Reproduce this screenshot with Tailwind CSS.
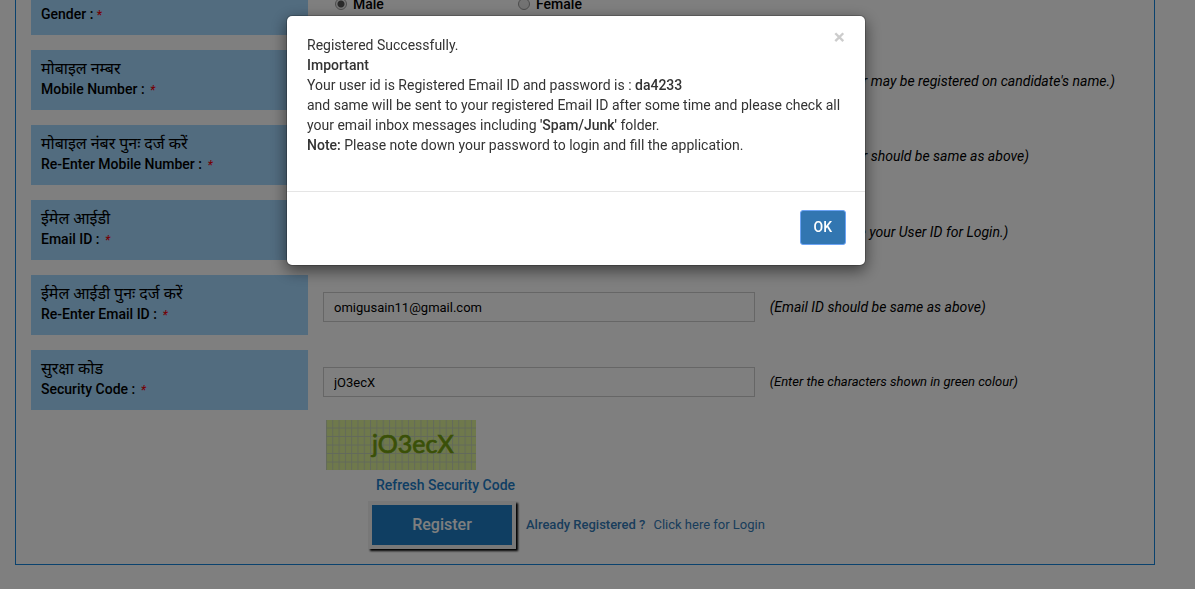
<!DOCTYPE html>
<html lang="en">
<head>
<meta charset="utf-8">
<title>Registration</title>
<script src="https://cdn.jsdelivr.net/npm/@tailwindcss/browser@4"></script>
</head>
<body class="bg-white font-['Roboto','Noto_Sans_Devanagari','Noto_Sans',sans-serif] text-sm leading-5 text-black overflow-hidden">
<main class="ml-[15px] mr-10 mb-6 border border-t-0 border-[#1484dc] px-[15px] pb-[15px]">
<form class="flex flex-col">
  <div class="flex flex-col gap-[15px]">
    <div class="grid grid-cols-12">
      <div class="col-span-3 bg-[#a4d8ff] px-2.5 pt-1 pb-[11px] font-medium">Gender : <span class="text-xs text-red-600">*</span></div>
      <div class="col-span-5 flex items-start pl-[27px] font-medium">
        <label class="flex w-[183px] items-center gap-1.5 -mt-1.5"><input type="radio" name="gender" checked class="size-3 appearance-none rounded-full border border-[#999] bg-[radial-gradient(circle,#555_0_3px,#eee_4px)]">Male</label>
        <label class="flex items-center gap-1.5 -mt-1.5"><input type="radio" name="gender" class="size-3 appearance-none rounded-full border border-[#999] bg-[#e6e6e6]">Female</label>
      </div>
    </div>
    <div class="grid grid-cols-12">
      <label for="mobile" class="col-span-3 bg-[#a4d8ff] px-2.5 pt-[9px] pb-[11px] font-medium"><span class="block text-base leading-5 font-normal" lang="hi">मोबाइल नम्बर</span>Mobile Number : <i class="ml-0.5 text-xs text-red-600">*</i></label>
      <div class="col-span-5 px-[15px] pt-[17px]"><input id="mobile" type="text" class="h-[30px] w-full border border-[#ccc] px-2.5 text-[13px]"></div>
      <p class="col-span-4 pt-[21px] italic whitespace-nowrap">(Mobile Number may be registered on candidate's name.)</p>
    </div>
    <div class="grid grid-cols-12">
      <label for="mobile2" class="col-span-3 bg-[#a4d8ff] px-2.5 pt-[9px] pb-[11px] font-medium"><span class="block text-base leading-5 font-normal" lang="hi">मोबाइल नंबर पुनः दर्ज करें</span>Re-Enter Mobile Number : <i class="ml-0.5 text-xs text-red-600">*</i></label>
      <div class="col-span-5 px-[15px] pt-[17px]"><input id="mobile2" type="text" class="h-[30px] w-full border border-[#ccc] px-2.5 text-[13px]"></div>
      <p class="col-span-4 pt-[21px] italic">(Mobile Number should be same as above)</p>
    </div>
    <div class="grid grid-cols-12">
      <label for="email" class="col-span-3 bg-[#a4d8ff] px-2.5 pt-[9px] pb-[11px] font-medium"><span class="block text-base leading-5 font-normal" lang="hi">ईमेल आईडी</span>Email ID : <i class="ml-0.5 text-xs text-red-600">*</i></label>
      <div class="col-span-5 px-[15px] pt-[17px]"><input id="email" type="text" class="h-[30px] w-full border border-[#ccc] px-2.5 text-[13px]"></div>
      <p class="col-span-4 pt-[22px] italic">(Email ID will be your User ID for Login.)</p>
    </div>
    <div class="grid grid-cols-12">
      <label for="email2" class="col-span-3 bg-[#a4d8ff] px-2.5 pt-[9px] pb-[11px] font-medium"><span class="block text-base leading-5 font-normal" lang="hi">ईमेल आईडी पुनः दर्ज करें</span>Re-Enter Email ID : <i class="ml-0.5 text-xs text-red-600">*</i></label>
      <div class="col-span-5 px-[15px] pt-[17px]"><input id="email2" type="text" value="omigusain11@gmail.com" class="h-[30px] w-full border border-[#ccc] px-2.5 text-[13px]"></div>
      <p class="col-span-4 pt-[22px] italic">(Email ID should be same as above)</p>
    </div>
    <div class="grid grid-cols-12">
      <label for="code" class="col-span-3 bg-[#a4d8ff] px-2.5 pt-[9px] pb-[11px] font-medium"><span class="block text-base leading-5 font-normal" lang="hi">सुरक्षा कोड</span>Security Code : <i class="ml-0.5 text-xs text-red-600">*</i></label>
      <div class="col-span-5 px-[15px] pt-[17px]"><input id="code" type="text" value="jO3ecX" class="h-[30px] w-full border border-[#ccc] px-2.5 text-[13px]"></div>
      <p class="col-span-4 pt-[22px] text-[13px] italic">(Enter the characters shown in green colour)</p>
    </div>
  </div>
  <div class="grid grid-cols-12 pt-2.5">
    <div class="col-span-9 col-start-4 flex flex-col items-start pl-[18px]">
      <svg width="150" height="50" role="img" aria-label="Security code">
        <defs><pattern id="g" width="6.300" height="8.500" patternUnits="userSpaceOnUse"><path d="M0 8H7M.5 0V9" stroke="#c4d2b8" stroke-width=".9"/></pattern></defs>
        <rect width="150" height="50" fill="#def298"/>
        <rect width="150" height="50" fill="url(#g)"/>
        <text x="46" y="33" font-family="Lato" font-size="25" fill="#74a00e" stroke="#74a00e" stroke-width=".7">jO3ecX</text>
      </svg>
      <a href="#" class="ml-[50px] mt-[5px] font-medium text-[#1c7cc8]">Refresh Security Code</a>
      <div class="ml-[42px] mt-[6px] flex items-center">
        <button type="button" class="h-12 w-[148px] border-4 border-[#f0f0f0] bg-[#1e7dc4] text-base font-medium text-white shadow-[2px_2px_2px_#000]">Register</button>
        <p class="ml-2.5 text-[13px] text-[#337ab7]"><span class="font-medium">Already Registered ?</span><a href="#" class="ml-2">Click here for Login</a></p>
      </div>
    </div>
  </div>
</form>
</main>
<div class="fixed inset-0 flex items-start justify-center bg-black/50 pt-[15px] pr-[43px]">
  <div role="dialog" aria-modal="true" class="w-[580px] rounded-md border border-black/20 bg-white bg-clip-padding text-[#333] shadow-[0_5px_15px_rgba(0,0,0,0.5)]">
    <div class="flex items-start justify-between border-b border-[#e5e5e5] pt-[19px] pb-9 pl-5">
      <p class="w-[540px]">Registered Successfully.<br><b class="font-medium">Important</b><br>Your user id is Registered Email ID and password is : <b class="font-medium">da4233</b><br>and same will be sent to your registered Email ID after some time and please check all your email inbox messages including <b class="font-medium">'Spam/Junk'</b> folder.<br><b class="font-medium">Note:</b> Please note down your password to login and fill the application.</p>
      <button type="button" aria-label="Close" class="-ml-5 -mt-2 mr-5 text-[21px] leading-5 font-bold text-black/20">×</button>
    </div>
    <div class="flex justify-end px-[19px] pt-[18px] pb-5">
      <button type="button" class="h-[35px] rounded-[3px] border border-[#6ba3f5] bg-[#3276b1] px-[13px] pb-0.5 font-medium text-white">OK</button>
    </div>
  </div>
</div>
</body>
</html>
